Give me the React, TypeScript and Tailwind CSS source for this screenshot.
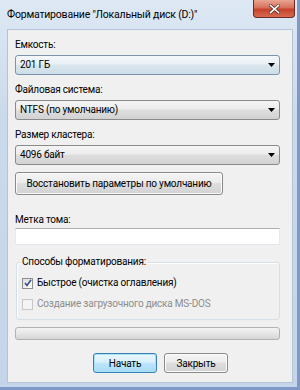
import React from "react";

const font = { fontFamily: 'Roboto, "Liberation Sans", Arial, sans-serif' };

const txt = "text-[10px] tracking-[-0.2px]";

function Combo({ value, hot }: { value: string; hot?: boolean }) {
  return (
    <div
      className={
        "relative flex h-[20px] items-center rounded-[3px] border pl-[4px] text-black " +
        txt +
        " " +
        (hot
          ? "border-[#7c93aa] bg-[linear-gradient(to_bottom,#f4f8fb_0%,#e9f0f5_45%,#dae6ee_50%,#cddde8_100%)]"
          : "border-[#8a8a8a] bg-[linear-gradient(to_bottom,#f5f5f5_0%,#ececec_45%,#dedede_50%,#d2d2d2_100%)]")
      }
    >
      <span className="whitespace-nowrap leading-[18px]">{value}</span>
      <svg className="absolute right-[4px] top-[7px]" width="7" height="4" viewBox="0 0 7 4">
        <path d="M0 0H7L3.5 4Z" fill="#000" />
      </svg>
    </div>
  );
}

function Label({ children }: { children: React.ReactNode }) {
  return <div className={"h-[14px] whitespace-nowrap leading-[14px] text-black " + txt}>{children}</div>;
}

const grayBtn =
  "rounded-[3px] border border-[#8a8a8a] bg-[linear-gradient(to_bottom,#f5f5f5_0%,#ececec_45%,#dedede_50%,#d2d2d2_100%)] shadow-[inset_0_0_0_1px_#fbfbfb]";

export default function App() {
  return (
    <div
      style={font}
      className="flex h-[390px] w-[300px] flex-col border-b-[3px] border-r-[3px] border-[#7f98c6] bg-[linear-gradient(to_bottom,#dde8f4_0%,#cbdaeb_30%,#c4d5ea_100%)]"
    >
      {/* title bar */}
      <div className="flex h-[29px] shrink-0 items-start justify-between">
        <div className="whitespace-nowrap pl-[7px] pt-[7px] text-[10.5px] leading-[16px] tracking-[-0.2px] text-black">
          Форматирование "Локальный диск (D:)"
        </div>
        <div className="mr-[2px] flex h-[18px] w-[42px] items-center justify-center rounded-b-[4px] border border-t-0 border-[#6d2a26] bg-[linear-gradient(to_bottom,#e8a593_0%,#d6705a_45%,#c5432c_55%,#d86a4e_100%)]">
          <svg width="11" height="10" viewBox="0 0 11 10">
            <path d="M1.5 1.5L9.5 8.5M9.5 1.5L1.5 8.5" stroke="#5a3030" strokeWidth="3" strokeLinecap="square" />
            <path d="M1.5 1.5L9.5 8.5M9.5 1.5L1.5 8.5" stroke="#ffffff" strokeWidth="1.6" strokeLinecap="square" />
          </svg>
        </div>
      </div>

      {/* body */}
      <div className="flex flex-1 pb-[4px] pl-[7px] pr-[4px]">
        <div className="flex flex-1 flex-col border border-[#b4c4d6] bg-[#f0f0f0] pl-[7px] pr-[12px] pt-[8px]">
          <Label>Емкость:</Label>
          <div className="mt-[3px]">
            <Combo value="201 ГБ" hot />
          </div>
          <div className="mt-[8px]">
            <Label>Файловая система:</Label>
          </div>
          <div className="mt-[3px]">
            <Combo value="NTFS (по умолчанию)" />
          </div>
          <div className="mt-[8px]">
            <Label>Размер кластера:</Label>
          </div>
          <div className="mt-[3px]">
            <Combo value="4096 байт" />
          </div>
          <div className="mt-[7px]">
            <div
              className={
                "flex h-[23px] w-[208px] items-center justify-center whitespace-nowrap text-black " + txt + " " + grayBtn
              }
            >
              Восстановить параметры по умолчанию
            </div>
          </div>
          <div className="mt-[18px]">
            <Label>Метка тома:</Label>
          </div>
          <div className="mt-[1px] h-[17px] border border-[#e3e9ef] border-t-[#abadb3] bg-white" />

          {/* group box */}
          <div className="relative ml-[1px] mt-[17px] h-[58px] rounded-[3px] border border-[#d5dfe5] shadow-[inset_1px_1px_0_#ffffff]">
            <div
              className={
                "absolute -top-[8px] left-[4px] whitespace-nowrap bg-[#f0f0f0] px-[1px] leading-[14px] text-black " + txt
              }
            >
              Способы форматирования:
            </div>
            <div className="flex flex-col gap-[7px] pl-[5px] pt-[13px]">
              <div className="flex items-center gap-[4px]">
                <div className="flex h-[11px] w-[11px] items-center justify-center border border-[#8e8f8f] bg-[linear-gradient(to_bottom_right,#dcdcdc,#ffffff)]">
                  <svg width="8" height="8" viewBox="0 0 8 8">
                    <path d="M1 4L3 6.5L7 0.8" stroke="#3a4f8c" strokeWidth="1.6" fill="none" />
                  </svg>
                </div>
                <span className={"whitespace-nowrap leading-[14px] text-black " + txt}>
                  Быстрое (очистка оглавления)
                </span>
              </div>
              <div className="flex items-center gap-[4px]">
                <div className="h-[11px] w-[11px] border border-[#c7c7c7] bg-[#f4f4f4]" />
                <span className={"whitespace-nowrap leading-[14px] text-[#8d8d8d] " + txt}>
                  Создание загрузочного диска MS-DOS
                </span>
              </div>
            </div>
          </div>

          {/* progress */}
          <div className="mt-[7px] h-[13px] rounded-[3px] border border-[#b2b2b2] bg-[linear-gradient(to_bottom,#f3f3f3_0%,#e6e6e6_50%,#d6d6d6_100%)]" />

          {/* buttons */}
          <div className="mt-[13px] flex gap-[7px] pl-[78px]">
            <div
              className={
                "flex h-[20px] w-[64px] items-center justify-center rounded-[3px] border border-[#3c7fb1] bg-[linear-gradient(to_bottom,#eaf6fd_0%,#d9f0fc_45%,#bee6fd_50%,#a7d9f5_100%)] text-black shadow-[inset_0_0_0_1px_#a7e3f7] " +
                txt
              }
            >
              Начать
            </div>
            <div className={"flex h-[20px] w-[64px] items-center justify-center text-black " + txt + " " + grayBtn}>
              Закрыть
            </div>
          </div>
        </div>
      </div>
    </div>
  );
}
